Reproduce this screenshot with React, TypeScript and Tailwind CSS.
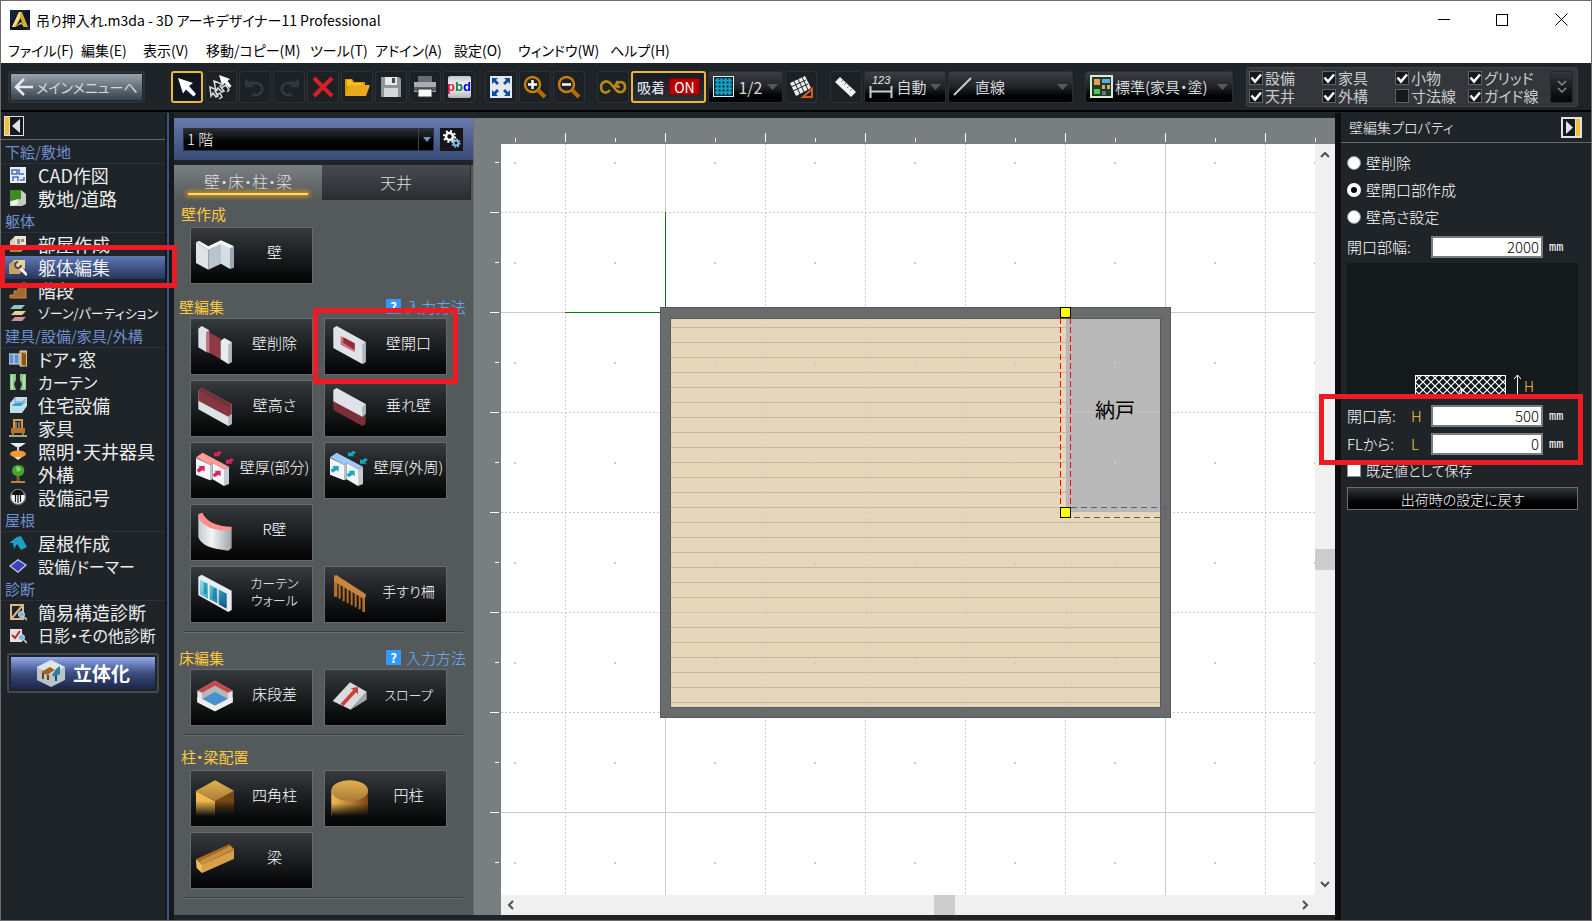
import React from "react";

const CJK = "font-['Noto_Sans_CJK_JP',sans-serif] [font-feature-settings:'palt']";

/* ---------- title and menu ---------- */

const menus: [string, string][] = [
  ["ファイル(F)", "w-[73px]"],
  ["編集(E)", "w-[62px]"],
  ["表示(V)", "w-[63px]"],
  ["移動/コピー(M)", "w-[104px]"],
  ["ツール(T)", "w-[65px]"],
  ["アドイン(A)", "w-[79px]"],
  ["設定(O)", "w-[64px]"],
  ["ウィンドウ(W)", "w-[92px]"],
  ["ヘルプ(H)", "w-[73px]"],
];

function TitleBar() {
  return (
    <header className={`bg-white text-black ${CJK}`}>
      <div className="flex h-[37px] items-center pl-[9px]">
        <svg width="20" height="20" viewBox="0 0 20 20" className="shrink-0" aria-hidden="true">
          <rect width="20" height="20" fill="#12233f" />
          <path d="M0 20 0 12 8 4 20 0V14L14 20z" fill="#0b1628" />
          <path d="M9 2h3l6 15h-4.5L10.500 8 6 17H2z" fill="#d9ab2b" />
          <path d="M9 2h1.500L10 8 4 17H2z" fill="#f7e08a" />
          <path d="M5 17 11 12 15 17 11 14z" fill="#f0c64a" />
        </svg>
        <h1 className="ml-[6px] flex-1 text-[14px] leading-5 whitespace-nowrap">吊り押入れ.m3da - 3D アーキデザイナー11 Professional</h1>
        <button aria-label="最小化" className="flex h-9 w-[59px] items-center justify-center">
          <svg width="12" height="12" stroke="#000" fill="none"><path d="M0 5.500h12" /></svg>
        </button>
        <button aria-label="最大化" className="flex h-9 w-[58px] items-center justify-center">
          <svg width="12" height="12" stroke="#000" fill="none"><rect x=".5" y=".5" width="11" height="11" /></svg>
        </button>
        <button aria-label="閉じる" className="flex h-9 w-[60px] items-center justify-center">
          <svg width="13" height="13" stroke="#000" fill="none"><path d="M.5.5l12 12M12.500.5l-12 12" /></svg>
        </button>
      </div>
      <nav className="flex h-[25px] items-center pb-[2px] pl-[7px] text-[14px] leading-5">
        {menus.map(([m, w]) => (
          <button key={m} className={`${w} shrink-0 text-left whitespace-nowrap`}>{m}</button>
        ))}
      </nav>
    </header>
  );
}

/* ---------- toolbar ---------- */

const Arrow = ({ className = "" }: { className?: string }) => (
  <svg width="11" height="6" className={`shrink-0 ${className}`} aria-hidden="true"><path d="M0 0h11L5.500 6z" fill="currentColor" /></svg>
);

function Tool({ label, active, children }: { label: string; active?: boolean; children: React.ReactNode }) {
  return (
    <button
      aria-label={label}
      className={`flex size-8 shrink-0 items-center justify-center rounded-[3px] ${active ? "border-2 border-[#eab83b] bg-[#10151f]" : "border border-[#2d3236] bg-[#1c2125]"}`}
    >
      {children}
    </button>
  );
}

const drop = "flex h-8 shrink-0 items-center rounded-[3px] border border-[#2a2f33] bg-linear-to-b from-[#3b3e42] via-[#202327] to-black text-[#d5d8da]";

const Magnifier = ({ plus }: { plus?: boolean }) => (
  <svg width="24" height="24" viewBox="0 0 24 24" fill="none" aria-hidden="true">
    <circle cx="9.500" cy="9.500" r="7.500" stroke="#c87d0c" strokeWidth="2.500" />
    <path d="M15 15l7 7" stroke="#b56c08" strokeWidth="4" />
    <path d={plus ? "M9.500 5v9M5 9.500h9" : "M5 9.500h9"} stroke="#fff" strokeWidth="2.500" />
  </svg>
);

const layers: [string, boolean][][] = [
  [["設備", true], ["天井", true]],
  [["家具", true], ["外構", true]],
  [["小物", true], ["寸法線", false]],
  [["グリッド", true], ["ガイド線", true]],
];

function Tick({ name, on }: { name: string; on: boolean }) {
  return (
    <label className="flex items-center gap-[2px] whitespace-nowrap">
      <span className="grid size-[14px] shrink-0">
        <input type="checkbox" defaultChecked={on} className="peer col-start-1 row-start-1 size-[14px] appearance-none border border-[#5c6165] bg-[#16191c]" />
        <svg viewBox="0 0 14 14" className="pointer-events-none invisible col-start-1 row-start-1 size-[14px] peer-checked:visible" fill="none" stroke="#fff" strokeWidth="2.500" aria-hidden="true"><path d="M2.500 6.500l3.500 4L12 3.500" /></svg>
      </span>
      {name}
    </label>
  );
}

function Toolbar() {
  return (
    <div className={`flex h-[49px] shrink-0 items-center border-b-2 border-black bg-[#1f2428] pl-[7px] ${CJK}`}>
      <button className="flex h-8 w-[137px] shrink-0 items-center justify-center rounded-[4px] border-2 border-[#2e3337] p-px">
        <span className="flex h-[26px] w-full items-center bg-linear-to-b from-[#9ba4ac] via-[#66717b] to-[#38434e] text-[#d4d9de]">
          <svg width="24" height="22" viewBox="0 0 24 22" fill="none" stroke="#e8ebee" strokeWidth="2.500" className="ml-px shrink-0" aria-hidden="true"><path d="M12 3 4 11l8 8M4 11h17" /></svg>
          <span className="text-[14px] leading-5 whitespace-nowrap">メインメニューへ</span>
        </span>
      </button>

      <div className="ml-[26px] flex gap-[2px]">
        <Tool label="選択" active>
          <svg width="22" height="22" viewBox="0 0 22 22" aria-hidden="true"><path d="M2 2l15 5-4 3 7 8-2.500 2.500-7.500-7-3 4z" fill="#fff" /></svg>
        </Tool>
        <Tool label="複数選択">
          <svg width="26" height="26" viewBox="0 0 26 26" aria-hidden="true">
            <path d="M11 1l11 4-2.500 2 4 5-2 2-5-5-2 3z" fill="#fff" />
            <path d="M6 7l8 3-2 2 4 5-2 1-4-4-2 3zM2 13l7 3-2 1 3 5-2 1-3-4-2 3z" fill="none" stroke="#d8dadb" strokeWidth="1.500" />
            <path d="M13 14l5-3 3 5-2 2M8 21l4-2 2 4-3 2" fill="none" stroke="#d8dadb" strokeWidth="1.500" />
          </svg>
        </Tool>
        <Tool label="元に戻す">
          <svg width="22" height="22" viewBox="0 0 22 22" fill="none" stroke="#32383c" strokeWidth="3" aria-hidden="true"><path d="M4 7h8c9 1 8 12-1 12H8" /><path d="M1 2v9h9z" fill="#32383c" stroke="none" /></svg>
        </Tool>
        <Tool label="やり直し">
          <svg width="22" height="22" viewBox="0 0 22 22" fill="none" stroke="#32383c" strokeWidth="3" aria-hidden="true"><path d="M18 7h-8C1 8 2 19 11 19h3" /><path d="M21 2v9h-9z" fill="#32383c" stroke="none" /></svg>
        </Tool>
        <Tool label="削除">
          <svg width="22" height="22" viewBox="0 0 22 22" stroke="#d5202b" strokeWidth="4" aria-hidden="true"><path d="M2 2l18 18M20 2 2 20" /></svg>
        </Tool>
        <Tool label="開く">
          <svg width="26" height="22" viewBox="0 0 26 22" aria-hidden="true"><path d="M1 3h7l2 3h11v13H1z" fill="#d99a08" /><path d="M3 4h4l2 3h10v3H3z" fill="#f5c518" /><path d="M6 9h20l-4 11H1z" fill="#eca920" /></svg>
        </Tool>
        <Tool label="保存">
          <svg width="22" height="22" viewBox="0 0 22 22" aria-hidden="true"><path d="M1 1h18l2 2v18H1z" fill="#8f9498" /><rect x="5" y="1" width="12" height="8" fill="#e6e8e9" /><rect x="12" y="2" width="3" height="5" fill="#454a4e" /><rect x="4" y="12" width="14" height="9" fill="#d5d8da" /></svg>
        </Tool>
        <Tool label="印刷">
          <svg width="24" height="22" viewBox="0 0 24 22" aria-hidden="true"><rect x="5" width="14" height="7" fill="#676c70" /><rect x="1" y="6" width="22" height="10" fill="#a9adb0" /><rect x="1" y="11" width="22" height="4" fill="#595e62" /><path d="M5 13h14v8H5z" fill="#fff" stroke="#33383b" /></svg>
        </Tool>
        <Tool label="文字">
          <span className="flex h-[22px] w-[23px] items-center justify-center rounded-[2px] bg-linear-to-b from-[#c3c8cc] via-white to-[#aeb4b8] font-['Liberation_Sans',sans-serif] text-[13px] leading-4 font-bold text-[#0000e0]">
            <span className="text-[#e01030]">p</span><span className="text-[#008040]">b</span>d
          </span>
        </Tool>
      </div>

      <div className="ml-[10px] flex gap-[2px]">
        <Tool label="全体表示">
          <svg width="22" height="22" viewBox="0 0 22 22" aria-hidden="true"><rect width="22" height="22" fill="#e3e9ef" /><path d="M2 2h6L6 4l3 3-2 2-3-3-2 2zM20 2h-6l2 2-3 3 2 2 3-3 2 2zM2 20h6l-2-2 3-3-2-2-3 3-2-2zM20 20h-6l2-2-3-3 2-2 3 3 2-2z" fill="#0b4f9c" /></svg>
        </Tool>
        <Tool label="拡大"><Magnifier plus /></Tool>
        <Tool label="縮小"><Magnifier /></Tool>
      </div>

      <div className="ml-[12px] flex gap-[2px]">
        <Tool label="連続">
          <svg width="28" height="18" viewBox="0 0 28 18" fill="none" stroke="#b98a12" strokeWidth="2.500" aria-hidden="true"><path d="M11 12c-4 5-9 2-9-3s6-8 10-3l5 6c4 4 9 2 9-3s-5-7-9-2" /><path d="M19 3l-3 5 5 1" /></svg>
        </Tool>
        <button className="flex h-8 w-[75px] shrink-0 items-center justify-between rounded-[3px] border-2 border-[#eab83b] bg-linear-to-b from-[#181b24] to-[#2a2f3a] px-[4px] text-[14px] leading-4 text-[#eceef0]">
          吸着
          <span className="flex h-[17px] w-[31px] items-center justify-center border border-[#8a0000] bg-[#b80000] text-[14px] text-white">ON</span>
        </button>
        <button className={`${drop} w-[75px] justify-between px-[4px]`}>
          <svg width="21" height="21" viewBox="0 0 21 21" fill="none" aria-hidden="true"><rect x=".5" y=".5" width="20" height="20" fill="#0a2a38" stroke="#e8eaeb" /><path d="M4.500 2v17M8.500 2v17M12.500 2v17M16.500 2v17M2 4.500h17M2 8.500h17M2 12.500h17M2 16.500h17" stroke="#12a3c8" strokeWidth="2" /></svg>
          <span className="text-[16px] leading-5">1/2</span>
          <Arrow className="text-[#55595c]" />
        </button>
        <Tool label="グリッド回転">
          <svg width="24" height="24" viewBox="0 0 24 24" aria-hidden="true"><path d="M1 8 16 1l6 12-15 8z" fill="#e9ebec" /><path d="M5 6l6 13M9 4l6 13M13 2l6 13M2 12l15-7M4 16l15-7" stroke="#25292c" /><path d="M14 22h9v-8z" fill="none" stroke="#d8591a" strokeWidth="2" /></svg>
        </Tool>
      </div>

      <div className="ml-[13px] flex gap-[2px]">
        <Tool label="定規">
          <svg width="24" height="24" viewBox="0 0 24 24" aria-hidden="true"><path d="M6 2l16 15-5 5L1 7z" fill="#f1f2f2" /><path d="M9 5l-2 2M12 8l-2 2M15 11l-2 2M18 14l-2 2" stroke="#7d8285" /></svg>
        </Tool>
        <button className={`${drop} w-[82px] justify-between px-[4px]`}>
          <svg width="24" height="24" viewBox="0 0 24 24" fill="none" stroke="#c9cccf" aria-hidden="true"><path d="M1.500 11v12M22.500 11v12M2 16.500h20" strokeWidth="2" /><text x="3" y="9" fontSize="11" fontStyle="italic" fontFamily="Liberation Sans" fill="#e4e6e8" stroke="none">123</text></svg>
          <span className="text-[15px] leading-5">自動</span>
          <Arrow className="text-[#55595c]" />
        </button>
        <button className={`${drop} w-[125px] px-[4px]`}>
          <svg width="20" height="20" viewBox="0 0 20 20" stroke="#c9cccf" strokeWidth="2" aria-hidden="true"><path d="M1 18 18 1" /></svg>
          <span className="ml-[2px] flex-1 text-left text-[15px] leading-5">直線</span>
          <Arrow className="text-[#55595c]" />
        </button>
      </div>

      <button className={`${drop} ml-[12px] w-[148px] px-[4px]`}>
        <svg width="23" height="23" viewBox="0 0 23 23" aria-hidden="true"><rect x="1" y="1" width="21" height="21" fill="#1f3d22" stroke="#d9ecd9" strokeWidth="2" /><path d="M4 4h6v6H4z" fill="#e99a55" /><path d="M12 4h8v4h-8z" fill="#5aa9e8" /><path d="M4 14h6v5H4z" fill="#56c456" /><path d="M12 10h3v4h-3zM17 10h3v4h-3z" fill="#e0a56b" /><path d="M12 16h4v4h-4z" fill="#6d7479" /></svg>
        <span className="ml-[2px] flex-1 text-left text-[15px] leading-5 whitespace-nowrap">標準(家具・塗)</span>
        <Arrow className="text-[#55595c]" />
      </button>

      <div className="ml-[13px] flex h-10 w-[332px] shrink-0 items-center rounded-[3px] border border-[#3d4246] bg-[#33373b] pl-[2px] text-[15px] leading-[18px] text-[#c9cccf]">
        {layers.map((col) => (
          <div key={col[0][0]} className="flex w-[73px] shrink-0 flex-col">
            {col.map(([name, on]) => <Tick key={name} name={name} on={on} />)}
          </div>
        ))}
        <button aria-label="その他の表示" className="ml-auto mr-[4px] flex h-8 w-[23px] shrink-0 items-center justify-center rounded-[2px] border border-[#24282b] bg-linear-to-b from-[#33373b] to-[#050505]">
          <svg width="10" height="14" viewBox="0 0 10 14" fill="none" stroke="#85898c" strokeWidth="1.500" aria-hidden="true"><path d="M1 1l4 4 4-4M1 8l4 4 4-4" /></svg>
        </button>
      </div>
    </div>
  );
}

/* ---------- navigation ---------- */

const navIcons: Record<string, React.ReactNode> = {
  cad: <><rect x="1" y="1" width="16" height="16" fill="#e8edf6" /><path d="M3 4h5v4H3zM10 3v5h5M4 15v-4h5v4M11 14h4v-3" fill="none" stroke="#4a6fc0" strokeWidth="1.500" /></>,
  site: <><path d="M1 1h11l5 4v10l-4 2H1z" fill="#c9ccc6" /><path d="M1 1h11v9L1 12z" fill="#3d8a1e" /><path d="M1 13l8-3v5l-6 2z" fill="#efefeb" /></>,
  room: <><path d="M1 6l5-5h11v12l-6 4H1z" fill="#d8cfb8" /><path d="M6 1h11v12H6z" fill="#eee6d4" /><path d="M8 4h3v5H8zM12 4h3v3h-3z" fill="#8e8a7e" /><path d="M2 14h12l-4 3H1z" fill="#c97a25" /></>,
  edit: <><path d="M0 6l5-4h11v9l-6 5H0z" fill="#c9a365" /><path d="M5 2h11v8H5z" fill="#e8d2a0" /><path d="M10 9l8 8" stroke="#fff" strokeWidth="2.500" /><path d="M12 7a3 3 0 1 1-3-3" fill="none" stroke="#4b4f55" strokeWidth="2" /></>,
  stairs: <path d="M1 17v-3h4v-4h4V6h4V2h4v15z" fill="#a6682c" stroke="#d9a05c" strokeWidth=".8" />,
  zone: <><path d="M1 5l4-4h11l-4 4z" fill="#8fc9c4" /><path d="M2 11l4-4h11l-4 4z" fill="#e2d29c" /><path d="M2 17l4-4h11l-4 4z" fill="#cf8f9f" /></>,
  door: <><rect x="0" y="4" width="10" height="10" fill="#5f8fc4" stroke="#d3e2f2" /><path d="M5 4v10" stroke="#d3e2f2" /><path d="M11 1h7v15h-7z" fill="#c98c46" stroke="#f2e6cf" /><path d="M13 3l4 1v12l-4-1z" fill="#8a5620" /></>,
  curtain: <><path d="M1 1h6v6l-2 4 2 6H1zM17 1h-6v6l2 4-2 6h6z" fill="#8cc684" /><path d="M3 2v14M15 2v14" stroke="#dff2da" /></>,
  bath: <><path d="M1 7l5-6h12v9l-5 7H1z" fill="#c3dcec" /><path d="M3 9h9l4-6M6 1v5h11" stroke="#6f9dbb" fill="none" /><path d="M3 10h9l3-3H6z" fill="#26a9dc" /></>,
  chair: <><path d="M5 1h8v9H5z" fill="none" stroke="#d39b53" strokeWidth="2" /><path d="M3 10h12v3H3zM4 13v4M14 13v4" fill="#b3762f" stroke="#b3762f" strokeWidth="2" /><path d="M7 3v6M10 3v6" stroke="#efc78a" /><path d="M0 17h18" stroke="#8fae8a" strokeWidth="2" /></>,
  lamp: <><path d="M1 1h16l-6 4H7z" fill="#e8eef0" /><path d="M9 4v5" stroke="#d9d9d9" strokeWidth="2" /><ellipse cx="9" cy="12" rx="8" ry="3.500" fill="#ef9a35" /><path d="M5 15h8l-4 3z" fill="#ffe9b5" /></>,
  tree: <><path d="M9 10v6" stroke="#8a5a24" strokeWidth="3" /><path d="M9 0c5 0 7 3 6 7-1 4-4 4-6 4S3 10 3 6c0-4 3-6 6-6z" fill="#46a52c" /><path d="M7 2c3-1 5 1 5 3l-4 2z" fill="#8ad66a" /><path d="M2 17h14" stroke="#b98544" strokeWidth="2" /></>,
  symbol: <><circle cx="9" cy="9" r="7.500" fill="#fff" stroke="#6f7376" strokeWidth="1.500" /><path d="M3 7h12l-1-3-3-2H7L4 4z" fill="#111" /><path d="M6.500 7v7M9 7v8M11.500 7v7" stroke="#111" strokeWidth="1.200" /></>,
  roof: <path d="M0 9l8-6 4-1 6 11-6 3-4-6-3 5-1-6z" fill="#1ba0c4" />,
  dormer: <><path d="M0 9 9 2l9 6-9 8z" fill="#c8cdf0" /><path d="M2 9l7-5.500 7 4.500-7 6.500z" fill="#3a43b8" /></>,
  frame: <><path d="M2 2h12v14H2zM3 15 13 3" fill="none" stroke="#d9b98a" strokeWidth="2" /><circle cx="12.500" cy="11.500" r="3" fill="#7fb4e6" stroke="#d9e6f2" /><path d="M15 14l3 3" stroke="#b0b4b8" strokeWidth="2" /></>,
  check: <><rect x="1" y="3" width="12" height="13" fill="#e6e3de" /><path d="M3 9l3 3 5-7" fill="none" stroke="#c22531" strokeWidth="2" /><circle cx="12.500" cy="11.500" r="3" fill="#7fb4e6" stroke="#d9e6f2" /><path d="M15 14l3 3" stroke="#b0b4b8" strokeWidth="2" /></>,
};

const nav: { head: string; items: [string, string, string?][] }[] = [
  { head: "下絵/敷地", items: [["cad", "CAD作図"], ["site", "敷地/道路"]] },
  { head: "躯体", items: [["room", "部屋作成"], ["edit", "躯体編集"], ["stairs", "階段"], ["zone", "ゾーン/パーティション", "text-[13px]"]] },
  { head: "建具/設備/家具/外構", items: [["door", "ドア・窓"], ["curtain", "カーテン", "text-[16px]"], ["bath", "住宅設備"], ["chair", "家具"], ["lamp", "照明・天井器具"], ["tree", "外構"], ["symbol", "設備記号"]] },
  { head: "屋根", items: [["roof", "屋根作成"], ["dormer", "設備/ドーマー", "text-[16px]"]] },
  { head: "診断", items: [["frame", "簡易構造診断"], ["check", "日影・その他診断", "text-[16px]"]] },
];

function Sidebar() {
  return (
    <aside className={`flex w-[164px] shrink-0 flex-col bg-[#1f2428] ${CJK}`}>
      <div className="mb-px flex h-[27px] shrink-0 items-center border-b border-[#65696c] pl-[3px]">
        <button aria-label="メニューを閉じる">
          <svg width="20" height="20" viewBox="0 0 20 20" className="block" aria-hidden="true"><rect width="20" height="20" fill="#dfe2ea" /><rect x="1" y="1" width="4" height="18" fill="#f7bf2c" /><rect x="6" y="1" width="13" height="18" fill="#15191c" /><path d="M16 3v14L8 10z" fill="#dfe2ea" /></svg>
        </button>
      </div>
      {nav.map((g) => (
        <section key={g.head}>
          <h2 className="h-[23px] border-b border-[#2b3040] pl-[4px] text-[15px] leading-[22px] whitespace-nowrap text-[#6f8fd0]">{g.head}</h2>
          {g.items.map(([ic, name, size = "text-[18px]"]) => (
            <button
              key={name}
              className={`flex h-[23px] w-full items-center whitespace-nowrap pb-[2px] pl-[8px] text-[#eceeef] ${name === "躯体編集" ? "bg-linear-to-b from-[#5f79b5] to-[#27355c]" : ""}`}
            >
              <svg width="18" height="18" viewBox="0 0 18 18" className="shrink-0" aria-hidden="true">{navIcons[ic]}</svg>
              <span className={`ml-[11px] leading-5 ${size}`}>{name}</span>
            </button>
          ))}
        </section>
      ))}
      <button className="mt-[6px] ml-[6px] flex h-10 w-[152px] shrink-0 rounded-[3px] border-2 border-[#44484c] p-[2px]">
        <span className="flex h-full w-full items-center justify-center gap-[7px] bg-linear-to-b from-[#93acf0] via-[#3d4f80] to-[#1c2747] text-[19px] leading-6 font-bold text-white">
          <svg width="30" height="27" viewBox="0 0 30 27" aria-hidden="true"><path d="M15 0 29 7v13l-14 7L1 20V7z" fill="#b9c3ca" /><path d="M15 0 29 7 15 14 1 7z" fill="#dfe6ea" /><path d="M5 12l9-5 5 3-8 5z" fill="#a5621d" /><path d="M7 13v6M12 15v5" stroke="#6f3f10" strokeWidth="2" /><path d="M20 9l4-3v8l-5 3-3-2z" fill="#2d7fa8" /><path d="M20 16v5" stroke="#1c4f6a" strokeWidth="2" /></svg>
          立体化
        </span>
      </button>
    </aside>
  );
}

/* ---------- part palette ---------- */

const slab = "M28 30 38 24 125 72V132L115 138 28 90z";
const slabEdge = "M115 78 125 72V132L115 138z";

const Thick = ({ top, arrow }: { top: string; arrow: string }) => (
  <>
    <path d="M18 48 60 68V115L18 98z" fill="#f4f6f8" />
    <path d="M60 68 68 62V112L60 115z" fill="#bcc3c8" />
    <path d="M68 62 102 82V132L68 112z" fill="#f4f6f8" />
    <path d="M102 82 117 74V126L102 132z" fill="#c4cacf" />
    <path d="M18 46 38 32 117 74 102 82 68 62 60 68z" fill={top} />
    <path d="M20 84l10-9-7-3h21v17l-6-5-12 8zM68 98l10-9-7-3h21v17l-6-5-12 8zM96 32l-10 7 7 4H72V30l6 3 10-7zM132 54l-10 7 7 4h-21V52l6 3 10-7z" fill={arrow} />
  </>
);

const tileIcons: Record<string, React.ReactNode> = {
  wall: <><path d="M18 46 55 68V128L18 108z" fill="#dde5ea" /><path d="M55 68 93 48V110L55 128z" fill="#b9c5cc" /><path d="M93 48 120 62V126L93 110z" fill="#d4dde3" /><path d="M120 62 132 58V122L120 126z" fill="#9ba8b1" /><path d="M18 46 28 42 55 58 93 40 132 58 120 64 93 50 55 68z" fill="#f6f9fa" /></>,
  del: <><path d="M50 38 92 62V124L50 100z" fill="#8d3a45" /><path d="M25 32 35 24 58 37 48 44V102L25 88z" fill="#dfe3e7" /><path d="M48 44 58 37V105L48 102z" fill="#b87a83" /><path d="M92 68 103 60 125 72V132L115 138 92 124z" fill="#e8ebee" /><path d="M115 80 125 72V132L115 138z" fill="#adb4ba" /></>,
  open: <><path d={slab} fill="#dfe3e7" /><path d={slabEdge} fill="#aeb5bb" /><path d="M50 54 92 76V102L50 80z" fill="#cf6f78" /><path d="M58 58 92 76V96L58 74z" fill="#8f3039" /></>,
  high: <><path d="M25 32 35 24 125 72V132L115 138 25 88z" fill="#dfe3e7" /><path d="M115 110 125 104V132L115 138z" fill="#aeb5bb" /><path d="M25 32 35 24 125 72V102L115 110 25 62z" fill="#843741" /><path d="M25 32 35 24 125 72 115 80z" fill="#74323b" /></>,
  hang: <><path d="M28 62 115 108 125 104V132L115 138 28 90z" fill="#7b2f39" /><path d="M28 30 38 24 125 72V102L115 110 28 64z" fill="#dfe3e7" /><path d="M115 80 125 72V102L115 110z" fill="#aeb5bb" /></>,
  part: <Thick top="#ff9d96" arrow="#cf2965" />,
  outer: <Thick top="#9cc8ff" arrow="#12a9bd" />,
  round: <><path d="M25 34C45 65 75 76 125 74V132L115 140C65 135 35 125 25 100z" fill="url(#cyl)" /><path d="M25 30 37 26C48 52 80 68 125 68V74L115 80C70 80 32 66 25 36z" fill="#ff8f8c" /></>,
  curtain: <><path d="M25 32 35 26 125 74V132L115 138 25 88z" fill="#e9edf2" /><path d="M30 40 54 53V98L30 85zM59 56 82 68V112L59 100zM86 70 110 83V128L86 115z" fill="url(#glass)" /><path d="M46 51V84M74 66V99M102 81V114" stroke="#1d7fa0" strokeWidth="9" opacity=".7" /></>,
  rail: <><path d="M30 28h10V92H30zM44 48h6v50h-6zM56 56h6v50h-6zM68 62h6v50h-6zM80 70h6v48h-6zM92 76h6v48h-6zM104 82h6v48h-6zM115 88h8v50h-8z" fill="#b4702a" /><path d="M30 32 38 28 125 84V94L115 96 30 46z" fill="#c98542" /></>,
  step: <><path d="M75 35 128 65V100L75 127 22 100V65z" fill="#e2e4e5" /><path d="M75 50 114 70V90L75 110 36 90V70z" fill="#b5b8ba" /><path d="M75 68 113 89 75 110 38 89z" fill="#4b8fd0" /><path d="M75 35 128 65 114 71 75 50 36 71 22 65z" fill="#c9474a" /><path d="M22 84V100L75 127 128 100V84L75 110z" fill="#eceded" /></>,
  slope: <><path d="M26 96 78 40 128 68 80 122z" fill="#d8dadb" /><path d="M128 68V92L80 122z" fill="#a4a7a9" /><path d="M50 104 88 62 80 58 102 54 102 76 96 70 58 112z" fill="#c9403f" /></>,
  square: <><path d="M18 62 75 94V138H18z" fill="url(#fadeL)" /><path d="M75 94 132 62V138H75z" fill="url(#fadeD)" /><path d="M75 31 132 62 75 94 18 62z" fill="url(#wood)" /></>,
  circle: <><path d="M22 60H132V138H22z" fill="url(#fadeC)" /><path d="M22 100H132V138H22z" fill="url(#fadeK)" /><ellipse cx="77" cy="62" rx="55" ry="31" fill="url(#wood)" /></>,
  beam: <><path d="M18 82 118 37 132 52V80L36 123 20 108z" fill="#7a4b14" /><path d="M18 82 118 37 132 52 36 98z" fill="#a36a20" /><path d="M28 88 122 42 132 52 36 98z" fill="#c98e3d" /><path d="M36 98 132 54V80L36 123z" fill="#d8a04b" /><path d="M18 82 36 98V123L20 108z" fill="#edbb62" /></>,
};

function Tile({ icon, children }: { icon: string; children: React.ReactNode }) {
  return (
    <button className="flex h-[57px] items-center border border-[#666a6d] bg-linear-to-b from-[#373b3e] via-[#1b1e20] to-[#040404] text-[15px] leading-4 text-white">
      <svg width="47" height="57" viewBox="0 0 141 171" className="-ml-px shrink-0" aria-hidden="true">{tileIcons[icon]}</svg>
      <span className="flex-1 pb-[7px] text-center whitespace-nowrap">{children}</span>
    </button>
  );
}

function Section({ title, help, tiles, className }: { title: string; help?: boolean; tiles: [string, React.ReactNode][][]; className: string }) {
  return (
    <section className={className}>
      <div className={`flex h-[23px] items-center justify-between pr-[7px] ${help ? "pl-[5px]" : "pb-[3px] pl-[7px]"}`}>
        <h3 className="text-[15px] leading-5 font-normal text-[#ffc83d]">{title}</h3>
        {help && (
          <a href="#help" className="flex items-center gap-[5px] text-[15px] leading-5 text-[#6cb0ff]">
            <span className="flex size-[15px] items-center justify-center bg-[#3399ff] text-[13px] leading-[15px] font-bold text-white">?</span>
            入力方法
          </a>
        )}
      </div>
      <div className="flex flex-col gap-[5px] pl-[16px]">
        {tiles.map((row, i) => (
          <div key={i} className="grid grid-cols-[123px_123px] gap-[11px]">
            {row.map(([ic, name]) => <Tile key={ic} icon={ic}>{name}</Tile>)}
          </div>
        ))}
      </div>
    </section>
  );
}

const Rule = ({ className }: { className: string }) => <hr className={`mx-[10px] h-[2px] border-0 border-t border-[#3b3f42] bg-[#696d70] ${className}`} />;

function Palette() {
  return (
    <div className={`flex w-[299px] shrink-0 flex-col bg-[#54595c] ${CJK} font-light`}>
      <svg width="0" height="0" className="absolute" aria-hidden="true">
        <defs>
          <linearGradient id="cyl"><stop offset="0" stopColor="#c5cacd" /><stop offset=".4" stopColor="#f3f5f6" /><stop offset="1" stopColor="#9da3a8" /></linearGradient>
          <linearGradient id="glass" x1="0" y1="0" x2="1" y2="1"><stop offset="0" stopColor="#8fe3ec" /><stop offset=".5" stopColor="#3aa7c6" /><stop offset="1" stopColor="#0d3f80" /></linearGradient>
          <linearGradient id="wood" x1="0" y1="0" x2="0" y2="1"><stop offset="0" stopColor="#e3b152" /><stop offset="1" stopColor="#a97b35" /></linearGradient>
          <linearGradient id="fadeL" x1="0" y1="0" x2="0" y2="1"><stop offset=".4" stopColor="#f0b84d" /><stop offset="1" stopColor="#f0b84d" stopOpacity="0" /></linearGradient>
          <linearGradient id="fadeD" x1="0" y1="0" x2="0" y2="1"><stop offset=".4" stopColor="#7a4a16" /><stop offset="1" stopColor="#2a1805" stopOpacity="0" /></linearGradient>
          <linearGradient id="fadeC"><stop offset="0" stopColor="#f3bc55" /><stop offset="1" stopColor="#7a4a16" /></linearGradient>
          <linearGradient id="fadeK" x1="0" y1="0" x2="0" y2="1"><stop offset="0" stopColor="#0a0a0a" stopOpacity="0" /><stop offset="1" stopColor="#0a0a0a" /></linearGradient>
        </defs>
      </svg>
      <div className="flex h-[47px] shrink-0 items-center gap-[6px] border-b-[5px] border-[#1f2428] bg-linear-to-b from-[#677cae] to-[#384a75] pr-[10px] pl-[9px]">
        <div className="grid h-[23px] flex-1 items-center">
          <select aria-label="階" className="col-start-1 row-start-1 h-full w-full appearance-none border border-[#2b3145] bg-linear-to-b from-[#2c2e30] to-black pl-[3px] text-[15px] leading-5 text-white">
            <option>1 階</option>
          </select>
          <span className="pointer-events-none col-start-1 row-start-1 flex h-full w-[16px] items-center justify-center justify-self-end border-l border-[#3e4144] text-[#6f93d6]"><svg width="8" height="5"><path d="M0 0h8L4 5z" fill="currentColor" /></svg></span>
        </div>
        <button aria-label="階の設定" className="flex size-[23px] items-center justify-center bg-[#141619]">
          <svg width="18" height="18" viewBox="0 0 18 18" fill="none" aria-hidden="true"><circle cx="6.500" cy="6.500" r="3.500" stroke="#fff" strokeWidth="2.500" /><circle cx="6.500" cy="6.500" r="5.500" stroke="#fff" strokeWidth="2" strokeDasharray="2 2.300" /><circle cx="13" cy="13" r="2.500" stroke="#8cc0ea" strokeWidth="2" /><circle cx="13" cy="13" r="4" stroke="#8cc0ea" strokeWidth="1.500" strokeDasharray="1.500 1.600" /></svg>
        </button>
      </div>
      <div className="flex h-[35px] shrink-0 pr-[2px] text-[16px] leading-6 text-[#dddfe0]">
        <button className="flex flex-1 flex-col items-center bg-linear-to-b from-[#7b7f82] to-[#54595c] pt-[4px]">
          壁・床・柱・梁
          <span className="h-[2px] w-[120px] bg-[#ffd873] shadow-[0_0_4px_2px_#c28d1f]" />
        </button>
        <button className="flex-1 border-r border-b border-[#25292c] bg-linear-to-b from-[#484c50] to-[#2a2e31]">天井</button>
      </div>
      <Section className="mt-[4px]" title="壁作成" tiles={[[["wall", "壁"]]]} />
      <Section
        className="mt-[11px]"
        title="壁編集"
        help
        tiles={[
          [["del", "壁削除"], ["open", "壁開口"]],
          [["high", "壁高さ"], ["hang", "垂れ壁"]],
          [["part", "壁厚(部分)"], ["outer", "壁厚(外周)"]],
          [["round", "R壁"]],
          [["curtain", <span className="text-[13px]">カーテン<br />ウォール</span>], ["rail", <span className="text-[14px]">手すり柵</span>]],
        ]}
      />
      <Rule className="mt-[8px]" />
      <Section className="mt-[13px]" title="床編集" help tiles={[[["step", "床段差"], ["slope", <span className="text-[13px]">スロープ</span>]]]} />
      <Rule className="mt-[8px]" />
      <Section className="mt-[11px]" title="柱・梁配置" tiles={[[["square", "四角柱"], ["circle", "円柱"]], [["beam", "梁"]]]} />
      <Rule className="mt-[8px]" />
    </div>
  );
}

/* ---------- floor plan ---------- */

const planks = Array.from({ length: 26 }, (_, i) => 183 + i * 15);

function Plan() {
  return (
    <svg className="block h-full w-full bg-white" shapeRendering="crispEdges" aria-label="平面図">
      <defs>
        <pattern id="gridDots" x="-37" y="-32" width="100" height="100" patternUnits="userSpaceOnUse"><rect x="50" y="50" width="2" height="2" fill="#cbcbcb" /></pattern>
        <pattern id="gridDash" x="64" y="68" width="100" height="100" patternUnits="userSpaceOnUse">
          <path d="M.5 0V100M0 .5H100" stroke="#cbcbcb" strokeDasharray="2 2" />
        </pattern>
      </defs>
      <rect width="100%" height="100%" fill="url(#gridDash)" />
      <rect width="100%" height="100%" fill="url(#gridDots)" />
      <rect x="164" width="1" height="100%" fill="#cbcbcb" />
      <rect x="664" width="1" height="100%" fill="#cbcbcb" />
      <rect y="168" width="100%" height="1" fill="#cbcbcb" />
      <rect y="668" width="100%" height="1" fill="#cbcbcb" />
      <path d="M164.500 68V164M64 168.500H160" stroke="#008000" />
      <rect x="159.500" y="163.500" width="510" height="410" fill="#696b6d" stroke="#56595f" />
      <rect x="169.500" y="174.500" width="490" height="389" fill="#e6d7bb" stroke="#56595f" />
      {planks.map((y) => <path key={y} d={`M170 ${y + 0.5}H659`} stroke="#c5b8a3" />)}
      <rect x="565" y="175" width="94" height="193" fill="#b9b9b9" />
      <path d="M565.500 175V367.500H659" stroke="#b5b4bd" fill="none" />
      <g stroke="#d0cfcd" strokeDasharray="2 2"><path d="M264.500 175V562M364.500 175V562M464.500 175V562M564.500 368V562M171 268.500H658M171 368.500H564M171 468.500H658" /></g>
      <rect x="170" y="175" width="488" height="387" fill="url(#gridDots)" />
      <path d="M570 363.500H664.500V373.500H570" fill="none" stroke="#5d5f63" strokeDasharray="6 4" />
      <path d="M559.500 174V364M569.500 174V364" fill="none" stroke="#ff0000" strokeDasharray="6 3" />
      <rect x="559.500" y="163.500" width="10" height="10" fill="#ff0" stroke="#000" />
      <rect x="559.500" y="363.500" width="10" height="10" fill="#ff0" stroke="#000" />
      <text x="614" y="274" textAnchor="middle" fontSize="20" fontFamily="Noto Sans CJK JP" fill="#000">納戸</text>
    </svg>
  );
}

const Chevron = ({ d }: { d: string }) => <svg width="10" height="10" viewBox="0 0 10 10" fill="none" stroke="#505050" strokeWidth="2" aria-hidden="true"><path d={d} /></svg>;

function Workspace() {
  return (
    <main className="grid min-w-0 flex-1 grid-cols-[27px_1fr_20px] grid-rows-[26px_1fr_20px] border-l border-[#6a6e71] bg-[#797e80]">
      <svg className="col-span-3 h-full w-full" shapeRendering="crispEdges" aria-hidden="true">
        <defs><pattern id="rulerX" x="41" width="100" height="26" patternUnits="userSpaceOnUse"><path d="M.5 20V24M50.500 15V24" stroke="#fff" /></pattern></defs>
        <rect width="100%" height="26" fill="url(#rulerX)" />
      </svg>
      <svg className="h-full w-full" shapeRendering="crispEdges" aria-hidden="true">
        <defs><pattern id="rulerY" y="18" width="27" height="100" patternUnits="userSpaceOnUse"><path d="M21 .5H25M16 50.500H25" stroke="#fff" /></pattern></defs>
        <rect width="27" height="100%" fill="url(#rulerY)" />
      </svg>
      <Plan />
      <div className="flex flex-col items-center justify-between bg-[#f0f0f0] py-[6px]">
        <Chevron d="M1 7l4-4 4 4" />
        <span className="mt-[80px] h-[21px] w-full bg-[#cdcdcd]" />
        <Chevron d="M1 3l4 4 4-4" />
      </div>
      <span />
      <div className="flex items-center justify-between bg-[#f0f0f0] px-[5px]">
        <Chevron d="M7 1 3 5l4 4" />
        <span className="ml-[73px] h-full w-[21px] bg-[#cdcdcd]" />
        <Chevron d="M3 1l4 4-4 4" />
      </div>
      <span className="bg-[#f0f0f0]" />
    </main>
  );
}

/* ---------- properties ---------- */

function Field({ id, label, mark, value }: { id: string; label: string; mark?: string; value: string }) {
  return (
    <div className="flex h-[23px] items-center">
      <label htmlFor={id} className="flex w-[84px] items-center whitespace-nowrap">
        <span className="w-[64px]">{label}</span>
        {mark && <span className="text-[#ffc83d]">{mark}</span>}
      </label>
      <input id={id} defaultValue={value} className="h-[22px] w-[112px] border-2 border-[#787c7f] bg-white pr-[2px] text-right text-[15px] text-black" />
      <span className="ml-[6px] pt-[3px] font-['Liberation_Mono',monospace] text-[12px] leading-5">mm</span>
    </div>
  );
}

function Properties() {
  return (
    <aside className={`flex w-[250px] shrink-0 flex-col bg-[#1f2428] text-[15px] leading-5 font-light text-white ${CJK}`}>
      <div className="flex h-[30px] shrink-0 items-center justify-between border-b border-[#65696c] pr-[9px] pl-[8px]">
        <h2 className="pb-[2px] text-[14px]">壁編集プロパティ</h2>
        <button aria-label="プロパティを閉じる">
          <svg width="21" height="21" viewBox="0 0 21 21" className="block" aria-hidden="true"><rect width="21" height="21" fill="#dfe2ea" /><rect x="2" y="2" width="12" height="17" fill="#15191c" /><rect x="15" y="2" width="4" height="17" fill="#f7bf2c" /><path d="M5 4v13l7-6.500z" fill="#dfe2ea" /></svg>
        </button>
      </div>
      <div className="flex flex-col pr-[13px] pl-[6px]">
        <fieldset className="mt-[6px]">
          {["壁削除", "壁開口部作成", "壁高さ設定"].map((t, i) => (
            <label key={t} className="flex h-[27px] items-center gap-[5px]">
              <input type="radio" name="mode" defaultChecked={i === 1} className="size-[14px] appearance-none rounded-full border border-[#8b8f92] bg-white checked:border-4 checked:border-white checked:bg-black" />
              {t}
            </label>
          ))}
        </fieldset>
        <div className="mt-[5px]"><Field id="width" label="開口部幅:" value="2000" /></div>
        <div className="mt-[5px] flex h-[136px] items-end bg-[#14191c] pl-[68px]">
          <svg width="130" height="25" viewBox="0 0 130 25" fill="none" aria-hidden="true">
            <defs><pattern id="hatch" width="8" height="8" patternUnits="userSpaceOnUse"><path d="M0 0l8 8M8 0 0 8" stroke="#fff" strokeWidth="1.200" /></pattern></defs>
            <rect x=".5" y="1.500" width="90" height="19" fill="url(#hatch)" stroke="#fff" />
            <path d="M102.500 1v20M99 5l3.500-4 3.500 4M46.500 15v10M44 18l2.500-4 2.500 4" stroke="#fff" />
            <text x="109" y="18" fontSize="14" fontFamily="Noto Sans CJK JP" fontWeight="300" fill="#ffc83d">H</text>
          </svg>
        </div>
        <div className="mt-[5px] flex flex-col gap-[5px]">
          <Field id="height" label="開口高:" mark="H" value="500" />
          <Field id="floor" label="FLから:" mark="L" value="0" />
        </div>
        <label className="mt-[4px] flex h-[22px] items-center gap-[5px] text-[14px]">
          <input type="checkbox" className="size-[14px] appearance-none border border-[#8b8f92] bg-white" />
          既定値として保存
        </label>
        <button className="mt-[6px] h-[23px] border border-[#6a6e71] bg-linear-to-b from-[#33363a] to-black text-[14px] leading-5">出荷時の設定に戻す</button>
      </div>
    </aside>
  );
}

/* ---------- window ---------- */

export default function App() {
  return (
    <div className="relative flex min-h-screen flex-col border border-[#6b6b6b] bg-[#1f2428]">
      <TitleBar />
      <Toolbar />
      <div className="flex flex-1 pt-px">
        <Sidebar />
        <div className="flex w-[9px] shrink-0 justify-center bg-[#15191c]"><span className="mr-[4px] w-[2px] bg-[#3c5284]" /></div>
        <div className="flex min-w-0 flex-1 pt-[5px] pb-[5px]">
          <Palette />
          <Workspace />
        </div>
        <div className="w-[6px] shrink-0 bg-[#0c0e10]" />
        <Properties />
      </div>
      <div className="pointer-events-none absolute top-[244px] -left-px h-[43px] w-[177px] border-[5px] border-[#ed1c24]" />
      <div className="pointer-events-none absolute top-[307px] left-[312px] h-[76px] w-[145px] border-[5px] border-[#ed1c24]" />
      <div className="pointer-events-none absolute top-[393px] right-[8px] h-[71px] w-[264px] border-[5px] border-[#ed1c24]" />
    </div>
  );
}
